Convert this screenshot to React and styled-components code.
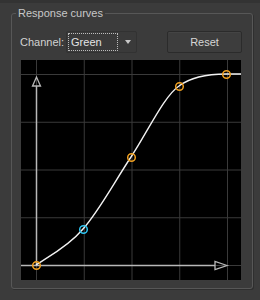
import styled, { createGlobalStyle } from 'styled-components';

const GlobalStyle = createGlobalStyle`
  body {
    margin: 0;
    background: #3b3b3b;
    font-family: 'Liberation Sans', Arial, sans-serif;
    font-size: 11px;
    color: #cfcfcf;
  }
`;

const Page = styled.div`
  width: 260px;
  height: 300px;
  overflow: hidden;
  border-top: 3px solid #333;
  box-sizing: border-box;
  padding: 3px 7px 0 11px;
`;

/* 그룹박스 */
const GroupBox = styled.fieldset`
  margin: 0;
  width: 242px;
  height: 283px;
  box-sizing: border-box;
  padding: 0 10px 8px 8px;
  border: 1px solid #575757;
  border-radius: 3px;
  box-shadow: 1px 1px 0 #2f2f2f;
  display: flex;
  flex-direction: column;
`;

const Legend = styled.legend`
  margin-left: -4px;
  padding: 0 2px;
  line-height: 14px;
  font-size: 11px;
  color: #c8c8c8;
`;

/* 채널 + 리셋 줄 */
const ToolRow = styled.div`
  display: flex;
  align-items: center;
  height: 23px;
  margin-top: 10px;
`;

const Label = styled.span`
  color: #d2d2d2;
  margin-right: 2px;
`;

const Combo = styled.div`
  display: flex;
  align-items: center;
  width: 71px;
  height: 22px;
  box-sizing: border-box;
  padding: 2px 3px 2px 1px;
  background: #3a3a3a;
  border: 1px solid #323232;
  border-radius: 2px;
`;

const ComboText = styled.span`
  flex: 1;
  height: 18px;
  line-height: 16px;
  box-sizing: border-box;
  padding-left: 2px;
  border: 1px dotted #bcbcbc;
  color: #e4e4e4;
`;

const ComboArrow = styled.span`
  width: 0;
  height: 0;
  margin-left: 7px;
  margin-right: 2px;
  border-left: 3.5px solid transparent;
  border-right: 3.5px solid transparent;
  border-top: 4px solid #c8c8c8;
`;

const Button = styled.button`
  margin-left: auto;
  width: 75px;
  height: 22px;
  background: #3d3d3d;
  border: 1px solid #2b2b2b;
  border-radius: 2px;
  box-shadow: inset 0 1px 0 #444;
  color: #d6d6d6;
  font-family: 'Liberation Sans', Arial, sans-serif;
  font-size: 11px;
  padding: 0;
`;

/* 커브 그래프 */
const Graph = styled.svg`
  display: block;
  margin-top: 7px;
  margin-left: 1px;
  width: 220px;
  height: 220px;
  background: #000;
`;

const GRID = [15, 62.75, 110.5, 158.25, 206];
const GRID_Y = [14, 61.75, 109.5, 157.25, 205];

const points = [
  { x: 15, y: 205, c: '#f0a020' },
  { x: 62, y: 169, c: '#2ec4f0' },
  { x: 110, y: 97, c: '#f0a020' },
  { x: 158, y: 26, c: '#f0a020' },
  { x: 205, y: 14, c: '#f0a020' },
];

const curve =
  'M15 205 C23 199 46 188 62 169 C78 151 94 121 110 97 C126 73 143 36 158 26 C170 17 188 14 205 14 L220 14';

const CurveGraph = () => (
  <Graph viewBox='0 0 220 220'>
    {GRID.map((x) => (
      <line key={'v' + x} x1={x + 0.5} y1='0' x2={x + 0.5} y2='220' stroke='#3a3a3a' />
    ))}
    {GRID_Y.map((y) => (
      <line key={'h' + y} x1='0' y1={y + 0.5} x2='220' y2={y + 0.5} stroke='#3a3a3a' />
    ))}
    {/* 축 */}
    <line x1='15.5' y1='26' x2='15.5' y2='205.5' stroke='#b8b8b8' strokeWidth='1.5' />
    <polygon points='15.5,17 11.5,26 19.5,26' fill='none' stroke='#b8b8b8' strokeWidth='1.3' />
    <line x1='0' y1='205.5' x2='194' y2='205.5' stroke='#b8b8b8' strokeWidth='1.5' />
    <polygon points='206,205.5 194,201.5 194,209.5' fill='none' stroke='#b8b8b8' strokeWidth='1.3' />
    <path d={curve} fill='none' stroke='#f2f2f2' strokeWidth='1.4' />
    {points.map((p, i) => (
      <circle key={i} cx={p.x + 0.5} cy={p.y + 0.5} r='3.8' fill='none' stroke={p.c} strokeWidth='1.5' />
    ))}
  </Graph>
);

const App = () => {
  return (
    <>
      <GlobalStyle />
      <Page>
        <GroupBox>
          <Legend>Response curves</Legend>
          <ToolRow>
            <Label>Channel:</Label>
            <Combo>
              <ComboText>Green</ComboText>
              <ComboArrow />
            </Combo>
            <Button>Reset</Button>
          </ToolRow>
          <CurveGraph />
        </GroupBox>
      </Page>
    </>
  );
};

export default App;
